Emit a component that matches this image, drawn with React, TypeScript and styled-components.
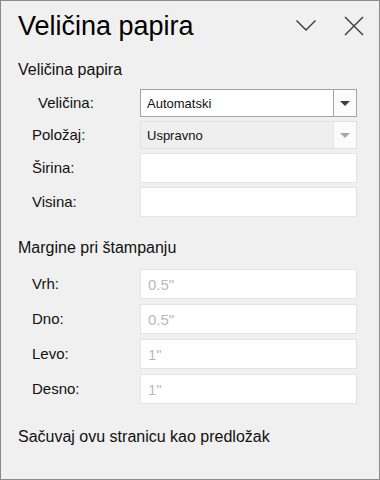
import React from 'react'
import styled, { createGlobalStyle } from 'styled-components'

const GlobalStyle = createGlobalStyle`
  html, body {
    margin: 0;
    padding: 0;
    background: #f0f0f0;
  }
  * {
    box-sizing: border-box;
  }
`

const sizeRows = [
  { label: 'Širina:', value: '' },
  { label: 'Visina:', value: '' },
]

const marginRows = [
  { label: 'Vrh:', value: '0.5"' },
  { label: 'Dno:', value: '0.5"' },
  { label: 'Levo:', value: '1"' },
  { label: 'Desno:', value: '1"' },
]

const ChevronIcon = () => (
  <svg width="24" height="24" viewBox="0 0 24 24">
    <path d="M2.5 6.5 L12 16 L21.5 6.5" fill="none" stroke="#3a3a3a" strokeWidth="1.4" />
  </svg>
)

const CloseIcon = () => (
  <svg width="22" height="22" viewBox="0 0 22 22">
    <path d="M2 2 L20 20 M20 2 L2 20" fill="none" stroke="#3a3a3a" strokeWidth="1.4" />
  </svg>
)

const App = () => {
  return (
    <>
      <GlobalStyle />
      <Panel>
        <Header>
          <Title>Veličina papira</Title>
          <Tools>
            <ToolButton><ChevronIcon /></ToolButton>
            <ToolButton><CloseIcon /></ToolButton>
          </Tools>
        </Header>

        <SectionTitle>Veličina papira</SectionTitle>
        <Form>
          <Label indent={6}>Veličina:</Label>
          <Select>
            <SelectText>Automatski</SelectText>
            <Arrow><Triangle /></Arrow>
          </Select>

          <Label>Položaj:</Label>
          <Select disabled>
            <SelectText>Uspravno</SelectText>
            <Arrow disabled><Triangle disabled /></Arrow>
          </Select>

          {sizeRows.map((row) => (
            <React.Fragment key={row.label}>
              <Label tall>{row.label}</Label>
              <Field placeholder={row.value} />
            </React.Fragment>
          ))}
        </Form>

        <SectionTitle gap={21}>Margine pri štampanju</SectionTitle>
        <Form loose>
          {marginRows.map((row) => (
            <React.Fragment key={row.label}>
              <Label tall>{row.label}</Label>
              <Field placeholder={row.value} />
            </React.Fragment>
          ))}
        </Form>

        <Footer>Sačuvaj ovu stranicu kao predložak</Footer>
      </Panel>
    </>
  )
}

export default App

const Panel = styled.div`
  width: 380px;
  height: 480px;
  border: 1px solid #8a8a8a;
  background-color: #f0f0f0;
  display: flex;
  flex-direction: column;
  font-family: "Liberation Sans", Arial, sans-serif;
  color: #000;
`
const Header = styled.div`
  height: 49px;
  display: flex;
  align-items: center;
  justify-content: space-between;
  padding: 0 13px 0 17px;
`
const Title = styled.h1`
  margin: 0;
  font-size: 27px;
  font-weight: 400;
  line-height: 30px;
  color: #000;
`
const Tools = styled.div`
  display: flex;
  align-items: center;
  gap: 24px;
`
const ToolButton = styled.div`
  display: flex;
  align-items: center;
  justify-content: center;
  width: 24px;
  height: 24px;
`
const SectionTitle = styled.div<{ gap?: number }>`
  margin-top: ${(p) => p.gap ?? 10}px;
  padding-left: 17px;
  font-size: 16px;
  line-height: 20px;
  color: #111;
`
const Form = styled.div<{ loose?: boolean }>`
  display: grid;
  grid-template-columns: 108px 1fr;
  row-gap: ${(p) => (p.loose ? 5 : 4)}px;
  align-items: center;
  margin-top: ${(p) => (p.loose ? 11 : 9)}px;
  padding: 0 22px 0 31px;
`
const Label = styled.div<{ indent?: number; tall?: boolean }>`
  padding-left: ${(p) => p.indent ?? 0}px;
  font-size: 15px;
  line-height: 20px;
  color: #111;
`
const Select = styled.div<{ disabled?: boolean }>`
  height: 28px;
  display: flex;
  align-items: stretch;
  background-color: ${(p) => (p.disabled ? '#efefef' : '#fff')};
  border: 1px solid ${(p) => (p.disabled ? '#e0e0e0' : '#a3a3a3')};
`
const SelectText = styled.div`
  flex: 1;
  display: flex;
  align-items: center;
  padding-left: 6px;
  font-size: 13px;
  color: #111;
`
const Arrow = styled.div<{ disabled?: boolean }>`
  width: 23px;
  display: flex;
  align-items: center;
  justify-content: center;
  border-left: 1px solid ${(p) => (p.disabled ? '#e6e6e6' : '#a3a3a3')};
  background-color: #fbfbfb;
`
const Triangle = styled.div<{ disabled?: boolean }>`
  width: 0;
  height: 0;
  border-left: 5px solid transparent;
  border-right: 5px solid transparent;
  border-top: 5px solid ${(p) => (p.disabled ? '#a8a8a8' : '#3c3c3c')};
`
const Field = styled.input`
  height: 30px;
  width: 100%;
  margin: 0;
  padding: 0 7px;
  border: 1px solid #e3e3e3;
  background-color: #fff;
  outline: none;
  font-family: "Liberation Sans", Arial, sans-serif;
  font-size: 15px;
  color: #111;
  &::placeholder {
    color: #b9b9b9;
  }
`
const Footer = styled.div`
  margin-top: 23px;
  padding-left: 17px;
  font-size: 16px;
  line-height: 20px;
  color: #111;
`
